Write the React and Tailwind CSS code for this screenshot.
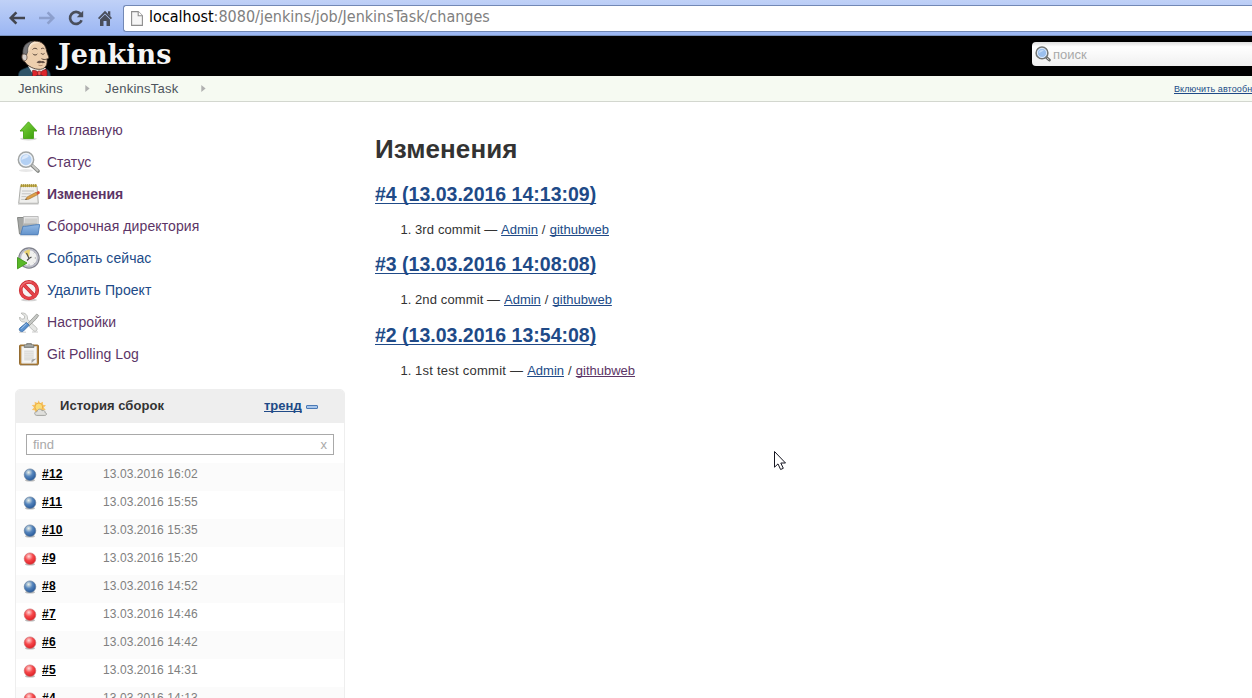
import React from 'react';

const Arrow = ({ className, flip }) => (
  <svg className={className} width="18" height="16" viewBox="0 0 18 16">
    <path
      transform={flip ? 'translate(18 0) scale(-1 1)' : undefined}
      d="M8.400 2.400 2.800 8l5.600 5.600M3 8h14"
      fill="none"
      stroke="currentColor"
      strokeWidth="2.600"
    />
  </svg>
);

const Reload = () => (
  <svg className="text-[#494e5b]" width="16" height="16" viewBox="0 0 16 16">
    <path d="M12.6 4A6 6 0 1 0 13.6 10.2" fill="none" stroke="currentColor" strokeWidth="2.7" />
    <path d="M15.2.8v6.4H8.8z" fill="currentColor" />
  </svg>
);

const Home = () => (
  <svg width="16" height="16" viewBox="0 0 16 16">
    <path d="M8 .8 15 8l-1.200 1.200L8 3.400 2.200 9.200 1 8z" fill="#494e5b" />
    <path d="M3 9.600 8 4.600l5 5V16H9.500v-5h-3v5H3z" fill="#494e5b" />
    <path d="M11 1.200h2.300v5L11 3.800z" fill="#494e5b" />
  </svg>
);

const Page = () => (
  <svg width="12" height="15" viewBox="0 0 12 15">
    <path d="M.6.6h6.6l4.2 4.2v9.6H.6z" fill="#f6f6f6" stroke="#8d8d8d" strokeWidth="1.1" />
    <path d="M7.2.6v4.2h4.2" fill="#fff" stroke="#8d8d8d" strokeWidth="1.1" />
  </svg>
);

const Butler = () => (
  <svg width="34" height="37" viewBox="0 0 34 37">
    <path d="M.3 37c0-4 1-6.500 4-7.600l6-2.400 11 5.500 7.500-3.500c2.500 1 3.700 4 3.700 8z" fill="#2f5468" stroke="#16303d" strokeWidth=".7" />
    <path d="M10 26l5 8 6-1.500 4 .5 3-5z" fill="#f0efec" />
    <path d="M7 22C3.500 20.500 2.800 15 5.500 13 4.500 6.500 9 1.300 16.500 1.100c8-.2 11.500 4.600 12.200 10.400l2 5.300c.5 1.600-.8 2.200-1.700 2.200.6 5.500-1 9.500-6.500 10.300-6.500.4-13-3.300-15.500-7.300z" fill="#edcfae" stroke="#3a2b22" strokeWidth=".8" />
    <path d="M8.500 6.500C11 2.500 17 1 22 3c-3-.3-7 .3-9 3-1.500 2.500-1.500 5-2.500 7z" fill="#f8e6d0" />
    <path d="M5 14.500C3.800 7.500 8 1.500 15.500 1.300 10.500 3.800 9.300 8 9.800 11.500L8.500 15z" fill="#77777a" stroke="#333" strokeWidth=".6" />
    <path d="M4.600 14.500c2.500-1.200 4.700.4 4.400 3.200-.2 2.800-2.300 4-3.900 2.300-1.200-1.300-1.500-4-.5-5.500z" fill="#d8d1cc" stroke="#4a3a30" strokeWidth=".7" />
    <path d="M14.500 9.500c1.300-1.600 3.400-1.600 4.800-.3M23 9c1-1 2.300-1 3.300-.2M14.800 13.700c1 1.700 3.400 1.800 4.500.2M23 13.200c.8 1.300 2.500 1.400 3.500.2M23.500 18.700c1.500.9 3.800 1.100 5.300.3" fill="none" stroke="#46362c" strokeWidth=".9" />
    <path d="M18.500 22.500c1.500-1.800 3.300-2.200 4.700-1.300 1.600-.6 3.200 0 4 1.300-1.500.8-3 .8-4.200.2-1.300.8-3 .7-4.500-.2z" fill="#675247" />
    <path d="M20.500 25.200c1.400.5 2.700.5 4 0" fill="none" stroke="#8f604a" strokeWidth=".7" />
    <path d="M14.500 30.500c2-.7 4.200.5 5.600 1.700h2.400c1.800-1.500 4-3 6-2.700.8 2.300.9 4.600.3 7-2.200.2-4.600-.6-6.500-2h-2c-1.800 1.600-3.800 2.300-5.800 2z" fill="#dc252b" stroke="#681016" strokeWidth=".6" />
    <rect x="19.700" y="31" width="3.200" height="4.300" rx="1" fill="#f35855" stroke="#7c161b" strokeWidth=".6" />
  </svg>
);

const Magnifier = ({ size }) => (
  <svg width={size} height={size} viewBox="0 0 24 24">
    <ellipse cx="10" cy="20.500" rx="7" ry="1.500" fill="#e8e8e8" />
    <path d="M16 15.500 22 21" stroke="#858784" strokeWidth="3.600" strokeLinecap="round" />
    <path d="M16.500 15.500 21.700 20.500" stroke="#c9cac7" strokeWidth="1.800" strokeLinecap="round" />
    <circle cx="10" cy="9.700" r="7.500" fill="#aacbf1" stroke="#a2a5a4" strokeWidth="1.800" />
    <circle cx="10" cy="9.700" r="6.200" fill="#b3d0f3" stroke="#edf2f8" strokeWidth="1.300" />
    <path d="M5.500 10c.3-3.500 3-5.500 6.500-4.800C14.500 7 9.500 8 5.500 10z" fill="#dce9fa" />
  </svg>
);

const SearchSmall = () => (
  <svg width="16" height="16" viewBox="0 0 16 16">
    <path d="M11.500 11.500l2.800 2.500" stroke="#666865" strokeWidth="3" strokeLinecap="round" />
    <path d="M11.800 11.800l2.300 2" stroke="#ccc" strokeWidth="1" />
    <circle cx="7" cy="6.900" r="5.900" fill="#8eb7e8" stroke="#737572" strokeWidth="1.500" />
    <circle cx="7" cy="6.900" r="4.600" fill="#9bc0ee" stroke="#eaf1f9" strokeWidth=".9" />
    <path d="M3.700 7.200c0-2.500 2.500-3.700 4.500-3.200 1.500 1-2 1.600-4.500 3.200z" fill="#c4daf5" />
  </svg>
);

const UpArrow = () => (
  <svg width="24" height="24" viewBox="0 0 24 24">
    <defs>
      <linearGradient id="up" x2="1" y2="1">
        <stop stopColor="#86d944" />
        <stop offset="1" stopColor="#369b08" />
      </linearGradient>
    </defs>
    <ellipse cx="12.500" cy="20.800" rx="8.500" ry="1.600" fill="#d8d8d8" />
    <path d="M12.500 3.800 21 13H17.500V20.500H7.500V13H4z" fill="url(#up)" stroke="#4ba51b" strokeWidth=".9" strokeLinejoin="round" />
  </svg>
);

const Notepad = () => (
  <svg width="24" height="24" viewBox="0 0 24 24">
    <path d="M4.500 4h16.500l1.300 17.300H2.700z" fill="#efefed" stroke="#a3a4a0" strokeWidth=".9" />
    <path d="M2 22h20.500" stroke="#c2c2c0" />
    <path d="M4.500 2.500h16.500v2.400H4.500z" fill="#c5ae49" />
    <path d="M5.500 2v3.200M7.500 2v3.200M9.500 2v3.200M11.500 2v3.200M13.500 2v3.200M15.500 2v3.200M17.500 2v3.200M19.500 2v3.200" stroke="#998631" strokeWidth=".7" />
    <path d="M6 9h12M5.800 11.800h9M5.500 14.600h5M5.200 17.400h5" stroke="#c4c4c2" strokeWidth="1" />
    <path d="M9.500 17.500l1.700-2.600 9-4.700 1.500 2.400-9 4.600z" fill="#dea048" stroke="#9b6a25" strokeWidth=".6" />
    <path d="M20.200 10.200l2.300-1.200c1.200.4 1.500 1.500 1.200 2.500l-2 1.200z" fill="#d65036" />
    <path d="M9.300 17.700l.8-1.200.8.9z" fill="#444" />
  </svg>
);

const Folder = () => (
  <svg width="24" height="24" viewBox="0 0 24 24">
    <defs>
      <linearGradient id="fold" x2="0" y2="1">
        <stop stopColor="#91b8e4" />
        <stop offset="1" stopColor="#6393cc" />
      </linearGradient>
    </defs>
    <path d="M1.500 3.500h6l1.200 1.300h12.800V20H3.500z" fill="#a5a7a5" stroke="#7f817e" strokeWidth=".9" />
    <path d="M7.500 2.500h14.700v10h-15z" fill="#e6e6e6" stroke="#a6a6a6" strokeWidth=".7" />
    <path d="M9 4.500h12V12H8z" fill="#d0d0ce" />
    <path d="M8 9.500h13.500L21 13H7z" fill="#a4a5a2" opacity=".7" />
    <path d="M7 12.200c4 .6 9-1.500 16.700-1.600L22 20.700H4.700z" fill="url(#fold)" stroke="#4c7eba" strokeWidth=".9" strokeLinejoin="round" />
    <path d="M4 21.700h18" stroke="#c3ccd7" strokeWidth=".8" />
  </svg>
);

const Clock = () => (
  <svg width="24" height="24" viewBox="0 0 24 24">
    <circle cx="13" cy="12" r="10" fill="#f1f1ef" stroke="#80828c" strokeWidth="1.500" />
    <circle cx="13" cy="12" r="8.700" fill="none" stroke="#b9bac6" strokeWidth="1.700" />
    <path d="M13 12 8 6c2-2 4.500-2.500 6-2.300z" fill="#e9d272" />
    <path d="M10.500 7l2.500 5.500 2.500-1.500M13 12.500l-2 2" fill="none" stroke="#50504e" strokeWidth="1.200" />
    <path d="M18.500 6.500l-.7.700M20 12h-1.200M18.500 17.500l-.7-.7M13 19.500v-1.200" stroke="#888" strokeWidth=".8" />
    <path d="M1.500 11.500 11 17 1.500 22.800z" fill="#59b928" stroke="#3f9519" strokeWidth=".9" />
  </svg>
);

const Forbidden = () => (
  <svg width="24" height="24" viewBox="0 0 24 24">
    <ellipse cx="13" cy="22" rx="8" ry="1.300" fill="#d3d3d3" />
    <circle cx="13" cy="12.200" r="8.300" fill="#f6f3f3" stroke="#c42a2e" strokeWidth="3.600" />
    <path d="M7.300 6.300 18.700 18" stroke="#c42a2e" strokeWidth="3.600" />
    <circle cx="13" cy="12.200" r="8.300" fill="none" stroke="#e5434a" strokeWidth="2.500" />
    <path d="M7.300 6.300 18.700 18" stroke="#e5434a" strokeWidth="2.500" />
    <path d="M5 9.500C6.500 5 11 3 15.500 4" fill="none" stroke="#f29194" strokeWidth=".8" />
  </svg>
);

const Tools = () => (
  <svg width="24" height="24" viewBox="0 0 24 24">
    <path d="M3 22.300h7M16 22h6" stroke="#ddd" strokeWidth="1.500" />
    <path d="M5 3.200 8.700 6l-.4 2.700-2.600.5L3.700 7c-.6 3 1.700 5.500 4.800 4.800l8.900 8.900c2.200 1.700 4.800-.7 3.200-3l-9.200-8.500C12.300 5.500 9 2 5 3.200z" fill="#e5e6e4" stroke="#b2b4b0" strokeWidth=".8" />
    <path d="M20.700 4l2 1.500-2.500 3.500-6.700 6.500-1.800-2 6-6.300z" fill="#c5c7c4" stroke="#92948f" strokeWidth=".8" />
    <path d="M10.500 12.500l2.700 2.700-6 6c-2.200 1.400-4.900-1-3.500-3z" fill="#5a90cd" stroke="#3c6faa" strokeWidth=".9" />
    <path d="M5.400 18.800l5-5" stroke="#a6c8ef" strokeWidth="1" />
  </svg>
);

const Clipboard = () => (
  <svg width="24" height="24" viewBox="0 0 24 24">
    <path d="M4 23.300h18" stroke="#ccc" />
    <rect x="3.500" y="3" width="19" height="19.700" rx="1" fill="#b98436" stroke="#8b6226" strokeWidth=".9" />
    <path d="M5.700 4.500h14.800v16.700H5.700z" fill="#f5f5f4" stroke="#dcdcda" strokeWidth=".8" />
    <path d="M8.200 8.500h9.500V17H15l-.5 1.500H8.200z" fill="#dededc" />
    <path d="M8.200 10.500h9.500M8.200 12.700h9.500M8.200 14.900h9.500" stroke="#e9e9e8" strokeWidth=".7" />
    <path d="M15.500 21v-3.500l5-1z" fill="#a4a4a2" />
    <path d="M8.200 3h2.500V1.500h4.700V3h2.500v2.500H8.200z" fill="#969894" stroke="#70726e" strokeWidth=".7" />
    <path d="M9 3.700h8" stroke="#b9bbb8" strokeWidth=".7" />
  </svg>
);

const Weather = () => (
  <svg width="16" height="16" viewBox="0 0 16 16">
    <path d="M7.700.2 9 3.200 12 1.700 11.800 4.800 15 5.300 12.700 7.600 14.800 10 11 10.500 4 12 3.800 10.200.8 10 3 7.500.7 5 3.900 4.800 3.600 1.700 6.500 3.100z" fill="#f6c363" />
    <circle cx="7.800" cy="7" r="3.900" fill="#fbdc74" stroke="#eca843" strokeWidth=".9" />
    <path d="M5.800 15.400c-3-.3-2.600-4 .2-3.700.5-3 4-3.300 5-1 2-.8 3.400.6 3 2 2.400.4 1.800 2.600-.2 2.700z" fill="#dfdfdc" stroke="#9b9c98" strokeWidth=".9" />
  </svg>
);

const Ball = ({ red }) => (
  <svg width="14" height="14" viewBox="0 0 14 14">
    <defs>
      <radialGradient id="ballRed" cx=".4" cy=".3" r=".7">
        <stop stopColor="#ffdada" />
        <stop offset=".5" stopColor="#f7484b" />
        <stop offset="1" stopColor="#dc1f25" />
      </radialGradient>
      <radialGradient id="ballBlue" cx=".38" cy=".3" r=".7">
        <stop stopColor="#eef2e8" />
        <stop offset=".5" stopColor="#5585bd" />
        <stop offset="1" stopColor="#285a9b" />
      </radialGradient>
    </defs>
    <ellipse cx="7" cy="12.300" rx="5" ry="1.200" fill="#bbb" />
    <circle cx="7" cy="6.700" r="5.800" fill={red ? 'url(#ballRed)' : 'url(#ballBlue)'} stroke={red ? '#c86a6c' : '#5f7896'} strokeWidth=".6" />
  </svg>
);

const Crumb = () => (
  <svg width="5" height="7" viewBox="0 0 5 7">
    <path d="M.3 0 4.600 3.500.3 7z" fill="#b0b0b0" />
  </svg>
);

const tasks = [
  { icon: <UpArrow />, label: 'На главную', cls: 'text-[#5c3566] tracking-[0.05px]' },
  { icon: <Magnifier size={24} />, label: 'Статус', cls: 'text-[#5c3566]' },
  { icon: <Notepad />, label: 'Изменения', cls: 'text-[#5c3566] font-bold' },
  { icon: <Folder />, label: 'Сборочная директория', cls: 'text-[#5c3566] tracking-[0.09px]' },
  { icon: <Clock />, label: 'Собрать сейчас', cls: 'text-[#204a87] tracking-[0.07px]' },
  { icon: <Forbidden />, label: 'Удалить Проект', cls: 'text-[#204a87] tracking-[0.07px]' },
  { icon: <Tools />, label: 'Настройки', cls: 'text-[#5c3566] tracking-[0.05px]' },
  { icon: <Clipboard />, label: 'Git Polling Log', cls: 'text-[#5c3566] tracking-[0.05px]' },
];

const builds = [
  { n: 12, t: '16:02' },
  { n: 11, t: '15:55' },
  { n: 10, t: '15:35' },
  { n: 9, t: '15:20', red: true },
  { n: 8, t: '14:52' },
  { n: 7, t: '14:46', red: true },
  { n: 6, t: '14:42', red: true },
  { n: 5, t: '14:31', red: true },
  { n: 4, t: '14:13', red: true },
];

const changes = [
  { title: '#4 (13.03.2016 14:13:09)', msg: '3rd commit', h: 'h-[70px]', msgCls: 'tracking-[0.12px]', web: 'text-[#204a87]' },
  { title: '#3 (13.03.2016 14:08:08)', msg: '2nd commit', h: 'h-[71px]', msgCls: 'tracking-[0.12px]', web: 'text-[#204a87]' },
  { title: '#2 (13.03.2016 13:54:08)', msg: '1st test commit', h: 'h-[70px]', msgCls: 'tracking-[0.25px]', web: 'text-[#5c3566]' },
];

const link = 'underline decoration-1 underline-offset-[1px] [text-decoration-skip-ink:none]';

export default function App() {
  return (
    <div className="relative flex h-[698px] w-[1252px] flex-col overflow-hidden bg-white font-['Liberation_Sans',Arial,sans-serif] text-[13px] text-[#333]">
      <div className="flex h-9 shrink-0 items-center border-b border-[#7a92bd] bg-linear-to-b from-[#c0d1f7] to-[#9bb6f3] pl-2">
        <Arrow className="text-[#43464f]" />
        <Arrow className="ml-[12px] text-[#8c9fcd]" flip />
        <div className="ml-[12px] flex"><Reload /></div>
        <div className="ml-[13px] flex"><Home /></div>
        <div className="ml-[10px] mt-px flex h-[27px] flex-1 items-center rounded-l-[3px] border border-r-0 border-[#7288b5] bg-white pl-[7px]">
          <Page />
          <div className="mt-[-2px] ml-[6px] whitespace-nowrap font-['DejaVu_Sans_Condensed','DejaVu_Sans',sans-serif] text-[16px] leading-5 text-[#808080] [font-stretch:condensed]">
            <span className="text-black">localhost</span>:8080/jenkins/job/JenkinsTask/changes
          </div>
        </div>
      </div>

      <header className="flex h-10 shrink-0 justify-between overflow-hidden bg-black">
        <div className="flex pl-[18px]">
          <div className="pt-[4px]"><Butler /></div>
          <div className="ml-[6px] font-['DejaVu_Serif',serif] text-[27px] font-bold leading-[38px] text-[#f5f5f5]">Jenkins</div>
        </div>
        <div className="mt-[6px] flex h-6 w-[220px] items-center rounded-l-[4px] bg-linear-to-b from-[#dedede] from-0% via-white via-20% to-[#f0f0f0] pl-[3px]">
          <SearchSmall />
          <span className="ml-[2px] mt-[2px] text-[13px] text-[#a9a9a9]">поиск</span>
        </div>
      </header>

      <nav className="flex h-[26px] shrink-0 items-center border-b border-[#d3d7cf] bg-[#f6faf2] pl-[18px] text-[13px] text-[#4d545d]">
        <span className="w-[67px] tracking-[0.1px]">Jenkins</span>
        <Crumb />
        <span className="ml-[15px] w-[96px] tracking-[0.25px]">JenkinsTask</span>
        <Crumb />
        <span className={`ml-auto w-[78px] overflow-hidden whitespace-nowrap text-[9px] leading-[14px] tracking-[0.1px] text-[#204a87] ${link}`}>Включить автообновление</span>
      </nav>

      <div className="flex min-h-0 flex-1">
        <aside className="flex w-[345px] shrink-0 flex-col pl-[15px] pt-[12px]">
          <ul>
            {tasks.map((t) => (
              <li key={t.label} className="flex h-8 items-center pl-[1px]">
                <span className="flex h-6 w-6 shrink-0">{t.icon}</span>
                <a className={`ml-[7px] whitespace-nowrap text-[14px] leading-4 ${t.cls}`}>{t.label}</a>
              </li>
            ))}
          </ul>

          <section className="mt-[19px] h-[330px] w-[330px] shrink-0 rounded-t-[5px] border border-[#eeeeee]">
            <div className="flex h-[33px] items-center rounded-t-[4px] bg-[#eeeeee] pb-[2px] pl-[15px]">
              <span className="mt-[4px] flex"><Weather /></span>
              <span className="ml-[13px] w-[204px] font-bold tracking-[0.05px]">История сборок</span>
              <a className={`font-bold text-[#204a87] ${link}`}>тренд</a>
              <span className="ml-[4px] mt-[3px] h-[4px] w-[12px] rounded-[1px] border border-[#4b7ab5] bg-[#a8c6eb]" />
            </div>
            <div className="mx-[10px] mt-[11px] flex h-[21px] items-center justify-between border border-[#a9a9a9] px-[6px] text-[#a9a9a9]">
              <span>find</span>
              <span>x</span>
            </div>
            <ul className="mt-[8px]">
              {builds.map((b) => (
                <li key={b.n} className="flex h-7 items-start odd:bg-[#fbfbfb]">
                  <span className="ml-[7px] mt-[5px] flex"><Ball red={b.red} /></span>
                  <span className="ml-[5px] w-[61px] pt-[3px] text-[12px] leading-4">
                    <a className={`font-bold tracking-[0.25px] text-black ${link}`}>#{b.n}</a>
                  </span>
                  <span className="pt-[3px] text-[12px] leading-4 tracking-[0.08px] text-[#808080]">13.03.2016 {b.t}</span>
                </li>
              ))}
            </ul>
          </section>
        </aside>

        <main className="pl-[30px] pt-[32px]">
          <h1 className="h-[49px] text-[26px] font-bold leading-[30px] tracking-[0.1px]">Изменения</h1>
          {changes.map((c) => (
            <section key={c.title} className={c.h}>
              <h2 className="text-[19.5px] font-bold leading-[22px]">
                <a className="text-[#204a87] underline decoration-1 underline-offset-[2px] [text-decoration-skip-ink:none]">{c.title}</a>
              </h2>
              <ol className="mt-[17px] list-decimal pl-10 leading-[15px]">
                <li>
                  <span className={c.msgCls}>{c.msg} — </span>
                  <a className={`text-[#204a87] ${link}`}>Admin</a>
                  <span className="tracking-[0.3px]"> / </span>
                  <a className={`${c.web} ${link}`}>githubweb</a>
                </li>
              </ol>
            </section>
          ))}
        </main>
      </div>

      <svg className="absolute left-[773px] top-[450px]" width="14" height="21" viewBox="0 0 14 21">
        <path d="M1.500 1.500v15.700l3.500-3.300 2.600 5.600 2.700-1.200-2.500-5.300h4.700z" fill="#fff" stroke="#151520" strokeWidth="1" />
      </svg>
    </div>
  );
}
